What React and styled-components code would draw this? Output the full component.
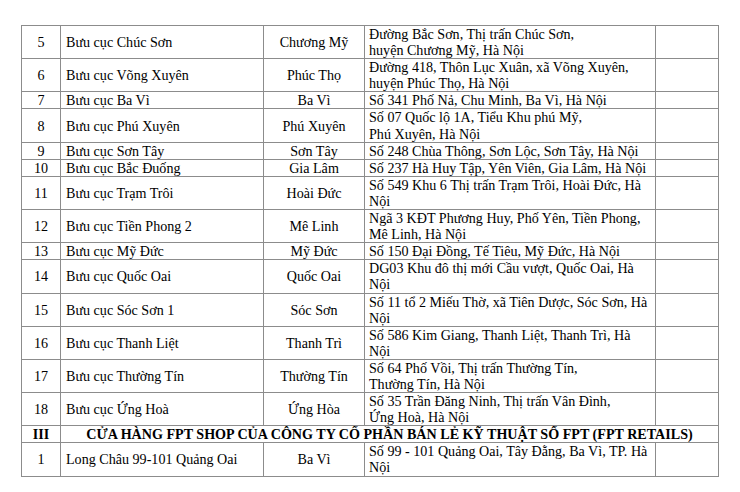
import React from "react";
import styled, { createGlobalStyle } from "styled-components";

const Global = createGlobalStyle`
  html, body { margin: 0; padding: 0; background: #fff; }
  body { font-family: "Liberation Serif", "Times New Roman", serif; color: #000; }
`;

const Page = styled.div`
  padding: 25px 0 0 21px;
`;

const Table = styled.table`
  border-collapse: collapse;
  table-layout: fixed;
  width: 697px;
  font-size: 14.1px;
  line-height: 16.1px;
`;

const Col = styled.col`
  width: ${(p) => p.$w}px;
`;

const Td = styled.td`
  border: 1px solid #8c8c8c;
  padding: 0 ${(p) => (p.$align === "center" ? "2px" : "5px")};
  text-align: ${(p) => p.$align || "left"};
  vertical-align: middle;
  white-space: nowrap;
  overflow: hidden;
  font-weight: ${(p) => (p.$bold ? "bold" : "normal")};
`;

const AddrTd = styled(Td)`
  vertical-align: top;
  padding-left: 4px;
`;

const rows = [
  ["5", "Bưu cục Chúc Sơn", "Chương Mỹ", ["Đường Bắc Sơn, Thị trấn Chúc Sơn,", "huyện Chương Mỹ, Hà Nội"]],
  ["6", "Bưu cục Võng Xuyên", "Phúc Thọ", ["Đường 418, Thôn Lục Xuân, xã Võng Xuyên,", "huyện Phúc Thọ, Hà Nội"]],
  ["7", "Bưu cục Ba Vì", "Ba Vì", ["Số 341 Phố Nả, Chu Minh, Ba Vì, Hà Nội"]],
  ["8", "Bưu cục Phú Xuyên", "Phú Xuyên", ["Số 07 Quốc lộ 1A, Tiểu Khu phú Mỹ,", "Phú Xuyên, Hà Nội"]],
  ["9", "Bưu cục Sơn Tây", "Sơn Tây", ["Số 248 Chùa Thông, Sơn Lộc, Sơn Tây, Hà Nội"]],
  ["10", "Bưu cục Bắc Đuống", "Gia Lâm", ["Số 237 Hà Huy Tập, Yên Viên, Gia Lâm, Hà Nội"]],
  ["11", "Bưu cục Trạm Trôi", "Hoài Đức", ["Số 549 Khu 6 Thị trấn Trạm Trôi, Hoài Đức, Hà", "Nội"]],
  ["12", "Bưu cục Tiền Phong 2", "Mê Linh", ["Ngã 3 KĐT Phương Huy, Phố Yên, Tiền Phong,", "Mê Linh, Hà Nội"]],
  ["13", "Bưu cục Mỹ Đức", "Mỹ Đức", ["Số 150 Đại Đồng, Tế Tiêu, Mỹ Đức, Hà Nội"]],
  ["14", "Bưu cục Quốc Oai", "Quốc Oai", ["DG03 Khu đô thị mới Cầu vượt, Quốc Oai, Hà", "Nội"]],
  ["15", "Bưu cục Sóc Sơn 1", "Sóc Sơn", ["Số 11 tổ 2 Miếu Thờ, xã Tiên Dược, Sóc Sơn, Hà", "Nội"]],
  ["16", "Bưu cục Thanh Liệt", "Thanh Trì", ["Số 586 Kim Giang, Thanh Liệt, Thanh Trì, Hà", "Nội"]],
  ["17", "Bưu cục Thường Tín", "Thường Tín", ["Số 64 Phố Vồi, Thị trấn Thường Tín,", "Thường Tín, Hà Nội"]],
  ["18", "Bưu cục Ứng Hoà", "Ứng Hòa", ["Số 35 Trần Đăng Ninh, Thị trấn Vân Đình,", "Ứng Hoà, Hà Nội"]],
];

const Lines = ({ lines }) =>
  lines.map((l, i) => (
    <React.Fragment key={i}>
      {i > 0 && <br />}
      {l}
    </React.Fragment>
  ));

const Row = ({ r }) => (
  <tr>
    <Td $align="center">{r[0]}</Td>
    <Td>{r[1]}</Td>
    <Td $align="center">{r[2]}</Td>
    <AddrTd>
      <Lines lines={r[3]} />
    </AddrTd>
    <Td />
  </tr>
);

export default function App() {
  return (
    <>
      <Global />
      <Page>
        <Table>
          <colgroup>
            <Col $w={39} />
            <Col $w={203} />
            <Col $w={101} />
            <Col $w={291} />
            <Col $w={63} />
          </colgroup>
          <tbody>
            {rows.map((r) => (
              <Row key={r[0]} r={r} />
            ))}
            <tr>
              <Td $align="center" $bold>III</Td>
              <Td $align="center" $bold colSpan={4}>
                CỬA HÀNG FPT SHOP CỦA CÔNG TY CỔ PHẦN BÁN LẺ KỸ THUẬT SỐ FPT (FPT RETAILS)
              </Td>
            </tr>
            <Row r={["1", "Long Châu 99-101 Quảng Oai", "Ba Vì", ["Số 99 - 101 Quảng Oai, Tây Đằng, Ba Vì, TP. Hà", "Nội"]]} />
          </tbody>
        </Table>
      </Page>
    </>
  );
}
